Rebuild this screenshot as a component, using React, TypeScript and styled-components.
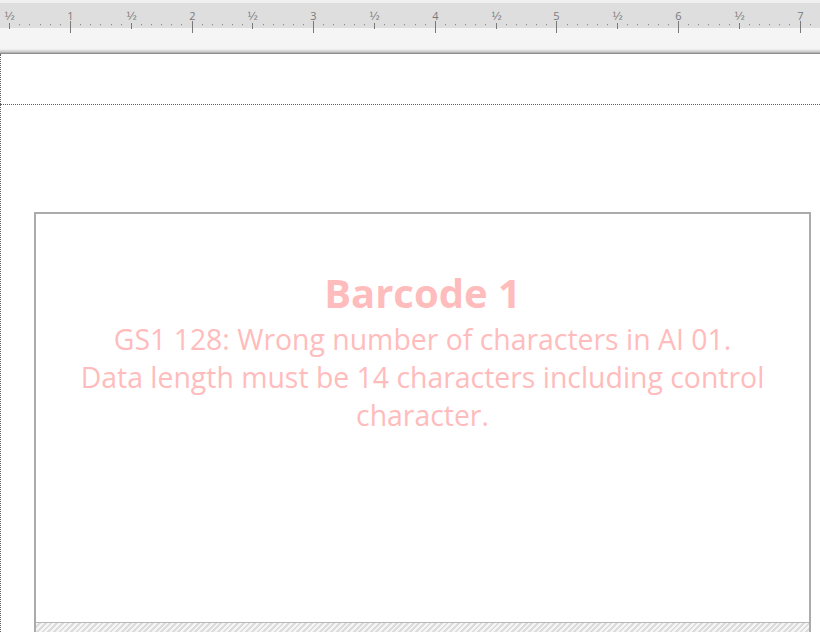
import React from "react";
import styled, { createGlobalStyle } from "styled-components";

const Global = createGlobalStyle`
  html, body { margin: 0; padding: 0; background: #ffffff; overflow: hidden; }
  body { width: 820px; height: 632px; font-family: "Open Sans", "Noto Sans", sans-serif; }
`;

const Page = styled.div`
  width: 820px;
  height: 632px;
  display: flex;
  flex-direction: column;
  overflow: hidden;
  background: #ffffff;
`;

const RulerBar = styled.div`
  flex: 0 0 54px;
  height: 54px;
  position: relative;
  background: linear-gradient(
    to bottom,
    #f0f0f0 0px,
    #f0f0f0 3px,
    #dedede 3px,
    #dedede 28px,
    #f5f5f5 28px,
    #f5f5f5 49px,
    #e4e4e4 50px,
    #cfcfcf 51.5px,
    #b4b4b4 52.5px,
    #8e8e8e 53px,
    #8e8e8e 54px
  );
`;

const RulerSvg = styled.svg`
  display: block;
  width: 820px;
  height: 54px;
`;

const Canvas = styled.div`
  flex: 1;
  display: flex;
  flex-direction: column;
  border-left: 1px dotted #5f5f5f;
`;

const MarginBand = styled.div`
  flex: 0 0 50px;
  border-bottom: 1px dotted #5f5f5f;
  margin-left: -1px;
`;

const Spacer = styled.div`
  flex: 0 0 107px;
`;

const LabelBox = styled.div`
  margin-left: 33px;
  width: 773px;
  flex: 1;
  display: flex;
  flex-direction: column;
  border: 2px solid #ababab;
  border-bottom: none;
`;

const LabelBody = styled.div`
  flex: 0 0 408px;
  display: flex;
  flex-direction: column;
  align-items: center;
  padding-top: 52px;
  box-sizing: border-box;
  color: #ffbcbc;
  text-align: center;
`;

const Title = styled.div`
  font-weight: 700;
  font-size: 40px;
  line-height: 54px;
`;

const ErrorLine = styled.div`
  font-size: 28.4px;
  line-height: 38px;
  white-space: nowrap;
`;

const Hatch = styled.div`
  flex: 1;
  border-top: 1px solid #b8b8b8;
  background: repeating-linear-gradient(
    135deg,
    #f6f6f6 0px,
    #f6f6f6 2px,
    #dcdcdc 2px,
    #dcdcdc 4px
  );
`;

const PPI = 121.6;
const ORIGIN = 70 - PPI;

function Ruler() {
  const items: React.ReactNode[] = [];
  for (let k = 0; k <= 8 * 12; k++) {
    const x = Math.round(ORIGIN + (k * PPI) / 12) + 0.5;
    if (x < -2 || x > 822) continue;
    if (k % 12 === 0) {
      const n = k / 12;
      items.push(<line key={"m" + k} x1={x} x2={x} y1={21} y2={33} stroke="#7a7a7a" strokeWidth={1} />);
      items.push(
        <text key={"t" + k} x={x} y={20} fontSize={11} fill="#7a7a7a" textAnchor="middle" fontFamily="'Open Sans', sans-serif">
          {n}
        </text>
      );
    } else if (k % 6 === 0) {
      items.push(<line key={"h" + k} x1={x} x2={x} y1={23} y2={29} stroke="#7a7a7a" strokeWidth={1} />);
      items.push(
        <text key={"ht" + k} x={x} y={20} fontSize={11} fill="#7a7a7a" textAnchor="middle" fontFamily="'DejaVu Sans', sans-serif">
          ½
        </text>
      );
    } else {
      items.push(<rect key={"d" + k} x={x - 0.5} y={24} width={1} height={1.2} fill="#8a8a8a" />);
    }
  }
  return (
    <RulerBar>
      <RulerSvg viewBox="0 0 820 54">{items}</RulerSvg>
    </RulerBar>
  );
}

export default function App() {
  return (
    <>
      <Global />
      <Page>
        <Ruler />
        <Canvas>
          <MarginBand />
          <Spacer />
          <LabelBox>
            <LabelBody>
              <Title>Barcode 1</Title>
              <ErrorLine>GS1 128: Wrong number of characters in AI 01.</ErrorLine>
              <ErrorLine>Data length must be 14 characters including control</ErrorLine>
              <ErrorLine>character.</ErrorLine>
            </LabelBody>
            <Hatch />
          </LabelBox>
        </Canvas>
      </Page>
    </>
  );
}
